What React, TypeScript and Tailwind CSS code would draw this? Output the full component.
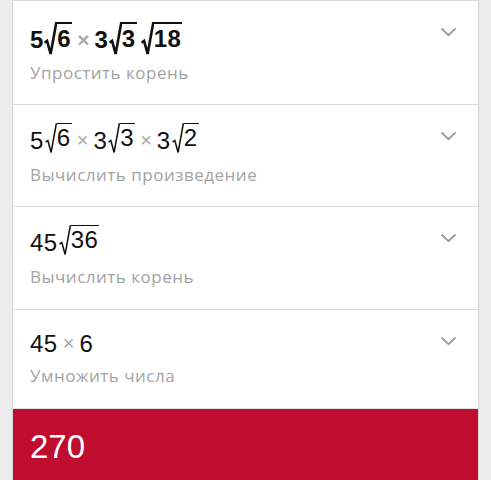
import React from "react";

const FONT = { fontFamily: '"Liberation Sans", Arial, sans-serif' };
const LABEL_FONT = { fontFamily: '"Open Sans", "Liberation Sans", sans-serif' };

function Radical({ bold }: { bold?: boolean }) {
  return (
    <svg
      width={bold ? 13 : 12}
      height="100%"
      viewBox="0 0 11 28"
      preserveAspectRatio="none"
      className="self-stretch shrink-0"
    >
      <path
        d="M0.5 17.5 L2.6 16 L5.6 27 L10.3 1 L11 1"
        fill="none"
        stroke="#111"
        strokeWidth={bold ? 2.2 : 1.4}
        strokeLinejoin="miter"
      />
    </svg>
  );
}

function Sqrt({ children, bold }: { children: React.ReactNode; bold?: boolean }) {
  return (
    <span className="flex items-stretch">
      <Radical bold={bold} />
      <span
        className={
          bold
            ? "border-t-[2px] border-[#111] leading-[30px] pr-[1px] tracking-[0.5px]"
            : "border-t-[1.5px] border-[#111] leading-[27px] pr-[1px] tracking-[0.5px]"
        }
      >
        {children}
      </span>
    </span>
  );
}

function Times({ bold }: { bold?: boolean }) {
  return (
    <span
      className={
        bold
          ? "text-[#a8a8a8] text-[21px] leading-[30px] mx-[5px] font-bold"
          : "text-[#a8a8a8] text-[20px] leading-[27px] mx-[5px]"
      }
    >
      ×
    </span>
  );
}

function Chevron() {
  return (
    <svg width="17" height="10" viewBox="0 0 17 10" className="shrink-0 mt-[26px]">
      <path d="M1.5 1.5 L8.5 8.2 L15.5 1.5" fill="none" stroke="#9e9e9e" strokeWidth="2" />
    </svg>
  );
}

function Row({
  h,
  pt,
  mt,
  expr,
  exprH,
  label,
}: {
  h: string;
  pt: string;
  mt: string;
  expr: React.ReactNode;
  exprH: string;
  label: string;
}) {
  return (
    <div className={`border-t border-[#dcdcdc] pl-[17px] pr-[21px] flex justify-between items-start ${h}`}>
      <div className={`flex flex-col ${pt}`}>
        <div className={`flex items-end ${exprH}`}>{expr}</div>
        <div className={`text-[17px] leading-[22px] text-[#a3a3a3] tracking-[0.5px] ${mt}`} style={LABEL_FONT}>
          {label}
        </div>
      </div>
      <Chevron />
    </div>
  );
}

export default function App() {
  const n = "leading-[27px] tracking-[0.5px]";
  return (
    <div className="w-[491px] h-[480px] bg-[#ececec] overflow-hidden" style={FONT}>
      <div className="mx-[12px] h-full bg-white border-x border-[#d6d6d6] flex flex-col text-[#111]">
        <Row
          h="h-[104px]"
          pt="pt-[22px]"
          mt="mt-[7px]"
          exprH="h-[32px]"
          label="Упростить корень"
          expr={
            <div className="flex items-end text-[24px] font-bold">
              <span className="leading-[30px] mr-[1px]">5</span>
              <Sqrt bold>6</Sqrt>
              <Times bold />
              <span className="leading-[30px] mr-[1px]">3</span>
              <Sqrt bold>3</Sqrt>
              <span className="w-[4px]" />
              <Sqrt bold>18</Sqrt>
            </div>
          }
        />
        <Row
          h="h-[102px]"
          pt="pt-[20px]"
          mt="mt-[10px]"
          exprH="h-[29px]"
          label="Вычислить произведение"
          expr={
            <div className="flex items-end text-[24px]">
              <span className={`${n} mr-[1px]`}>5</span>
              <Sqrt>6</Sqrt>
              <Times />
              <span className={`${n} mr-[1px]`}>3</span>
              <Sqrt>3</Sqrt>
              <Times />
              <span className={`${n} mr-[1px]`}>3</span>
              <Sqrt>2</Sqrt>
            </div>
          }
        />
        <Row
          h="h-[103px]"
          pt="pt-[20px]"
          mt="mt-[10px]"
          exprH="h-[29px]"
          label="Вычислить корень"
          expr={
            <div className="flex items-end text-[24px]">
              <span className={`${n} mr-[1px]`}>45</span>
              <Sqrt>36</Sqrt>
            </div>
          }
        />
        <Row
          h="h-[99px]"
          pt="pt-[18px]"
          mt="mt-[8px]"
          exprH="h-[29px]"
          label="Умножить числа"
          expr={
            <div className="flex items-end text-[24px]">
              <span className={n}>45</span>
              <Times />
              <span className={n}>6</span>
            </div>
          }
        />
        <div className="border-t border-[#e4e4e4] flex-1 bg-[#c00d2f] pl-[17px] pt-[18px]">
          <div className="text-white text-[33px] leading-[40px]">270</div>
        </div>
      </div>
    </div>
  );
}
